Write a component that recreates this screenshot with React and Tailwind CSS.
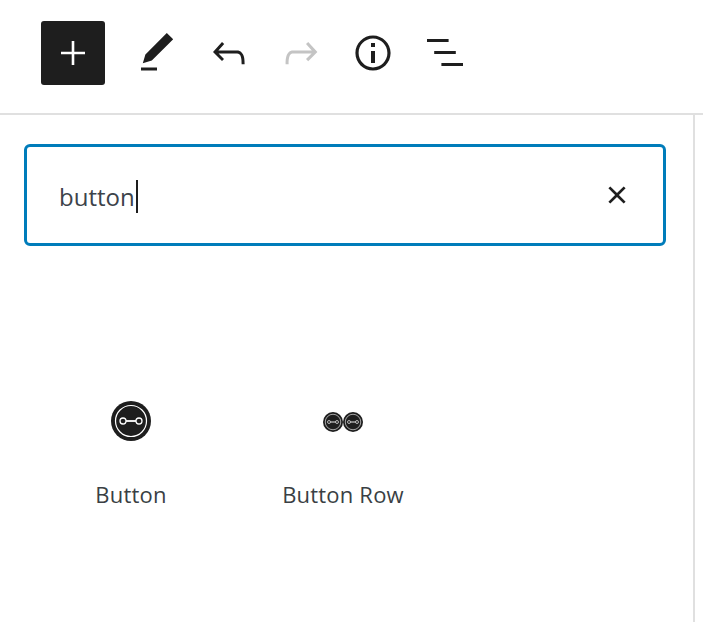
const font = { fontFamily: '"Open Sans", sans-serif' };

function Icon({ d, color = "#1e1e1e", size = 48 }) {
  return (
    <svg width={size} height={size} viewBox="0 0 24 24" fill={color}>
      <path d={d} />
    </svg>
  );
}

function ToolButton({ d, color }) {
  return (
    <div className="flex h-16 w-[72px] items-center justify-center">
      <Icon d={d} color={color} />
    </div>
  );
}

function ButtonGlyph({ size, cx, cy }) {
  const s = size / 40;
  return (
    <g transform={`translate(${cx} ${cy}) scale(${s})`}>
      <circle r="20" fill="#1e1e1e" />
      <circle r="15.5" fill="none" stroke="#fff" strokeWidth="1.2" />
      <circle cx="-8" r="3" fill="none" stroke="#fff" strokeWidth="1.3" />
      <circle cx="8" r="3" fill="none" stroke="#fff" strokeWidth="1.3" />
      <path d="M-5 0H5" stroke="#fff" strokeWidth="1.8" />
    </g>
  );
}

function BlockItem({ label, children }) {
  return (
    <div className="flex w-[212px] flex-col items-center">
      <div className="flex h-10 items-center justify-center">{children}</div>
      <div className="mt-[38px] text-[22px] leading-[30px] tracking-[0.2px] text-[#3a3f44]">{label}</div>
    </div>
  );
}

export default function App() {
  return (
    <div className="h-[622px] w-[703px] overflow-hidden bg-white" style={font}>
      <div className="flex h-[115px] items-start border-b-2 border-[#e0e0e0] pl-[41px] pt-[21px]">
        <div className="mr-4 flex h-16 w-16 items-center justify-center rounded-[3px] bg-[#1e1e1e]">
          <Icon color="#fff" d="M18 11.35h-5.35V6h-1.3v5.35H6v1.3h5.35V18h1.3v-5.35H18z" />
        </div>
        <ToolButton d="M20.1 5.1L16.9 2 6.2 12.7l-1.3 4.4 4.5-1.3L20.1 5.1zM4 20.8h8v-1.5H4v1.5z" />
        <ToolButton d="M18.3 11.7c-.6-.6-1.4-.9-2.3-.9H6.7l2.9-3.3-1.1-1-4.5 5L8.5 16l1-1-2.7-2.7H16c.5 0 .9.2 1.3.5 1 1 1 3.4 1 4.5v.3h1.5v-.2c0-1.5 0-4.3-1.5-5.7z" />
        <ToolButton color="#c4c4c4" d="M15.6 6.5l-1.1 1 2.9 3.3H8c-.9 0-1.7.3-2.3.9-1.4 1.5-1.4 4.2-1.4 5.7v.2h1.5v-.3c0-1.1 0-3.5 1-4.5.3-.3.7-.5 1.3-.5h9.2L14.5 15l1.1 1.1 4.6-4.6-4.6-5z" />
        <ToolButton d="M12 3.2c-4.8 0-8.8 3.9-8.8 8.8 0 4.8 3.9 8.8 8.8 8.8 4.8 0 8.8-3.9 8.8-8.8 0-4.8-4-8.8-8.8-8.8zm0 16c-4 0-7.2-3.3-7.2-7.2C4.8 8 8 4.8 12 4.8s7.2 3.3 7.2 7.2c0 4-3.2 7.2-7.2 7.2zM11 17h2v-6h-2v6zm0-8h2V7h-2v2z" />
        <ToolButton d="M3 5H13.8V6.5H3zM6.6 11H17.4V12.5H6.6zM10.2 17H21V18.5H10.2z" />
      </div>
      <div className="h-[507px] w-[695px] border-r-2 border-[#e0e0e0] pl-6 pr-[27px] pt-[29px]">
        <div className="flex h-[102px] items-center justify-between rounded-[6px] border-[3px] border-[#007cba] pl-[32px] pr-[22px]">
          <div className="flex items-center text-[24px] leading-[34px] text-[#3c434a]">
            <span className="relative top-[2px]">button</span>
            <span className="relative top-[1px] ml-px h-[33px] w-[2px] bg-[#1e1e1e]" />
          </div>
          <Icon d="M12 12.95l3.35 3.35.95-.95L12.95 12l3.35-3.35-.95-.95L12 11.05 8.65 7.7l-.95.95L11.05 12 7.7 15.35l.95.95L12 12.95z" />
        </div>
        <div className="mt-[155px] flex pl-px">
          <BlockItem label="Button">
            <svg width="40" height="40" viewBox="0 0 40 40">
              <ButtonGlyph size={40} cx={20} cy={20} />
            </svg>
          </BlockItem>
          <BlockItem label="Button Row">
            <svg width="40" height="40" viewBox="0 0 40 40">
              <ButtonGlyph size={20} cx={10} cy={21} />
              <ButtonGlyph size={20} cx={30} cy={21} />
            </svg>
          </BlockItem>
        </div>
      </div>
    </div>
  );
}
